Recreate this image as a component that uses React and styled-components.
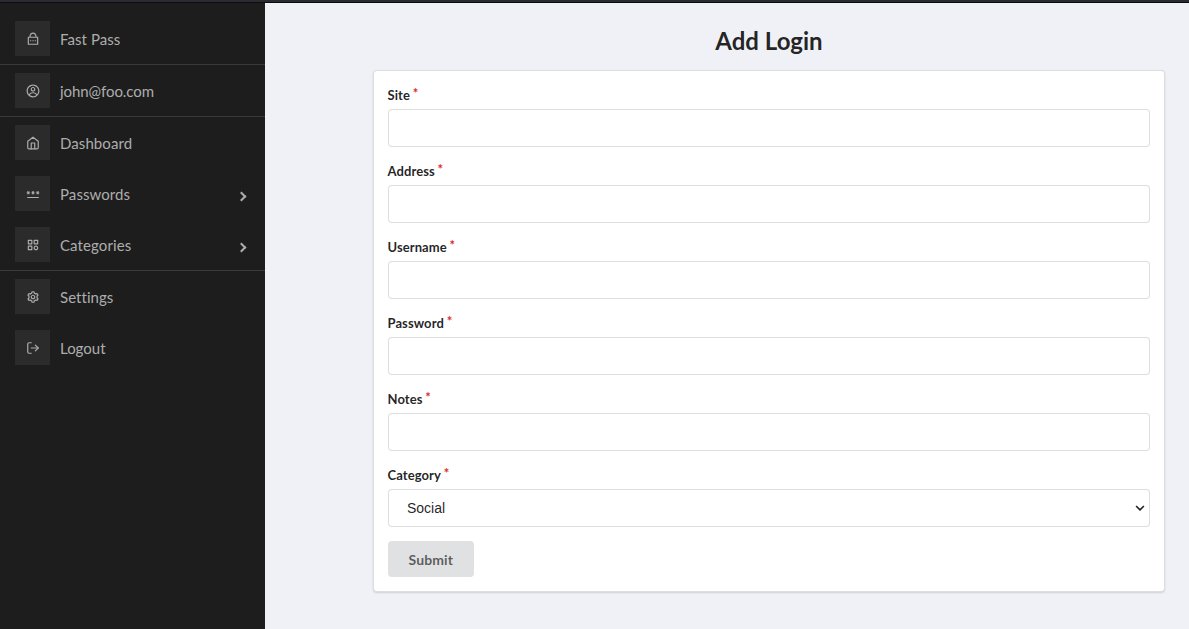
import React from "react";
import styled, { createGlobalStyle } from "styled-components";
import { RiLockPasswordLine } from "react-icons/ri";
import { CgProfile } from "react-icons/cg";
import { FiHome, FiLogOut } from "react-icons/fi";
import { MdPassword } from "react-icons/md";
import { BiCategory, BiCog } from "react-icons/bi";

const GlobalStyle = createGlobalStyle`
  *, *::before, *::after { box-sizing: border-box; }
  body {
    margin: 0;
    background: #f0f1f6;
    color: rgba(0, 0, 0, 0.87);
    font-family: Lato, "Liberation Sans", sans-serif;
    font-size: 14px;
    line-height: 20px;
    font-variant-ligatures: none;
  }
`;

const Page = styled.div`
  display: flex;
  flex-direction: column;
  height: 100vh;
  overflow: hidden;
`;

const TopEdge = styled.div`
  flex: none;
  height: 3px;
  background: #2b2a33;
  border-bottom: 1px solid #0c0c0d;
`;

const Body = styled.div`
  display: flex;
  flex: 1;
  min-height: 0;
`;

const Sidebar = styled.nav`
  flex: none;
  width: 265px;
  padding-top: 10px;
  background: #1d1d1d;
  color: #adadad;
`;

const MenuGroup = styled.ul`
  list-style: none;
  margin: 0;
  padding: 0;
  border-bottom: ${(p) => (p.$last ? "none" : "1px solid rgba(173, 173, 173, 0.2)")};
`;

const MenuItem = styled.li`
  display: flex;
  align-items: center;
  height: 51px;
  padding: 0 20px 0 15px;
  font-size: 15px;
`;

const IconBox = styled.span`
  display: flex;
  align-items: center;
  justify-content: center;
  width: 35px;
  height: 35px;
  margin-right: 10px;
  background: #2b2b2b;
  font-size: 14px;
`;

const ItemLabel = styled.span`
  flex: 1;
  letter-spacing: ${(p) => p.$tracking || "normal"};
`;

const Arrow = styled.span`
  width: 7px;
  height: 7px;
  margin-top: 5px;
  border: solid currentColor;
  border-width: 0 2px 2px 0;
  transform: rotate(-45deg);
`;

const Main = styled.main`
  flex: 1;
  padding: 21px 24px 0 108px;
`;

const Title = styled.h2`
  margin: 0 0 13px;
  font-size: 24px;
  font-weight: 700;
  line-height: 33px;
  text-align: center;
`;

const Card = styled.form`
  height: 522px;
  padding: 14px;
  background: #fff;
  border: 1px solid rgba(34, 36, 38, 0.15);
  border-radius: 4px;
  box-shadow: 0 1px 2px 0 rgba(34, 36, 38, 0.15);
`;

const Field = styled.div`
  margin-bottom: 14px;
`;

const Label = styled.label`
  display: block;
  height: 20px;
  margin: 0 0 4px -0.5px;
  font-size: 13px;
  font-weight: 700;
  line-height: 20px;
  letter-spacing: 0.08px;

  &::after {
    content: "*";
    display: inline-block;
    margin: -2px 0 0 2.8px;
    vertical-align: top;
    color: #db2828;
  }
`;

const control = `
  display: block;
  width: 100%;
  height: 38px;
  border: 1px solid rgba(34, 36, 38, 0.15);
  border-radius: 4px;
  background: #fff;
  color: rgba(0, 0, 0, 0.87);
  outline: none;
`;

const Input = styled.input`
  ${control}
  padding: 0 14px;
  font: 14px Lato, sans-serif;
`;

const SelectWrap = styled.div`
  display: grid;
  align-items: center;

  > * {
    grid-area: 1 / 1;
  }
`;

const Select = styled.select`
  ${control}
  appearance: none;
  padding: 0 18px;
  font: 14px "Liberation Sans", Arial, sans-serif;
`;

const SelectChevron = styled.svg`
  justify-self: end;
  width: 10px;
  height: 8px;
  margin: 0 5px 0 0;
  pointer-events: none;
`;

const SubmitButton = styled.button`
  display: block;
  width: 86px;
  height: 36px;
  padding: 1px 0.5px 0 0;
  border: 0;
  border-radius: 4px;
  background: #e0e1e2;
  color: rgba(0, 0, 0, 0.6);
  font: 700 14px Lato, sans-serif;
  letter-spacing: 0.08px;
`;

const menu = [
  [{ label: "Fast Pass", icon: RiLockPasswordLine, tracking: "0.06px" }],
  [{ label: "john@foo.com", icon: CgProfile, tracking: "-0.07px" }],
  [
    { label: "Dashboard", icon: FiHome, tracking: "0.08px" },
    { label: "Passwords", icon: MdPassword, tracking: "0.08px", nested: true },
    { label: "Categories", icon: BiCategory, tracking: "0.1px", nested: true },
  ],
  [
    { label: "Settings", icon: BiCog, tracking: "0.05px" },
    { label: "Logout", icon: FiLogOut },
  ],
];

const fields = ["Site", "Address", "Username", "Password", "Notes"];

export default function App() {
  return (
    <Page>
      <GlobalStyle />
      <TopEdge />
      <Body>
        <Sidebar>
          {menu.map((items, i) => (
            <MenuGroup key={i} $last={i === menu.length - 1}>
              {items.map(({ label, icon: Icon, nested, tracking }) => (
                <MenuItem key={label}>
                  <IconBox>
                    <Icon />
                  </IconBox>
                  <ItemLabel $tracking={tracking}>{label}</ItemLabel>
                  {nested && <Arrow />}
                </MenuItem>
              ))}
            </MenuGroup>
          ))}
        </Sidebar>
        <Main>
          <Title>Add Login</Title>
          <Card>
            {fields.map((name) => (
              <Field key={name}>
                <Label htmlFor={name}>{name}</Label>
                <Input id={name} type={name === "Password" ? "password" : "text"} />
              </Field>
            ))}
            <Field>
              <Label htmlFor="Category">Category</Label>
              <SelectWrap>
                <Select id="Category">
                  <option>Social</option>
                </Select>
                <SelectChevron viewBox="0 0 10 8" aria-hidden="true">
                  <path d="M1.1 2 5 5.9 8.9 2" fill="none" stroke="#222" strokeWidth="1.6" />
                </SelectChevron>
              </SelectWrap>
            </Field>
            <SubmitButton type="button">Submit</SubmitButton>
          </Card>
        </Main>
      </Body>
    </Page>
  );
}
